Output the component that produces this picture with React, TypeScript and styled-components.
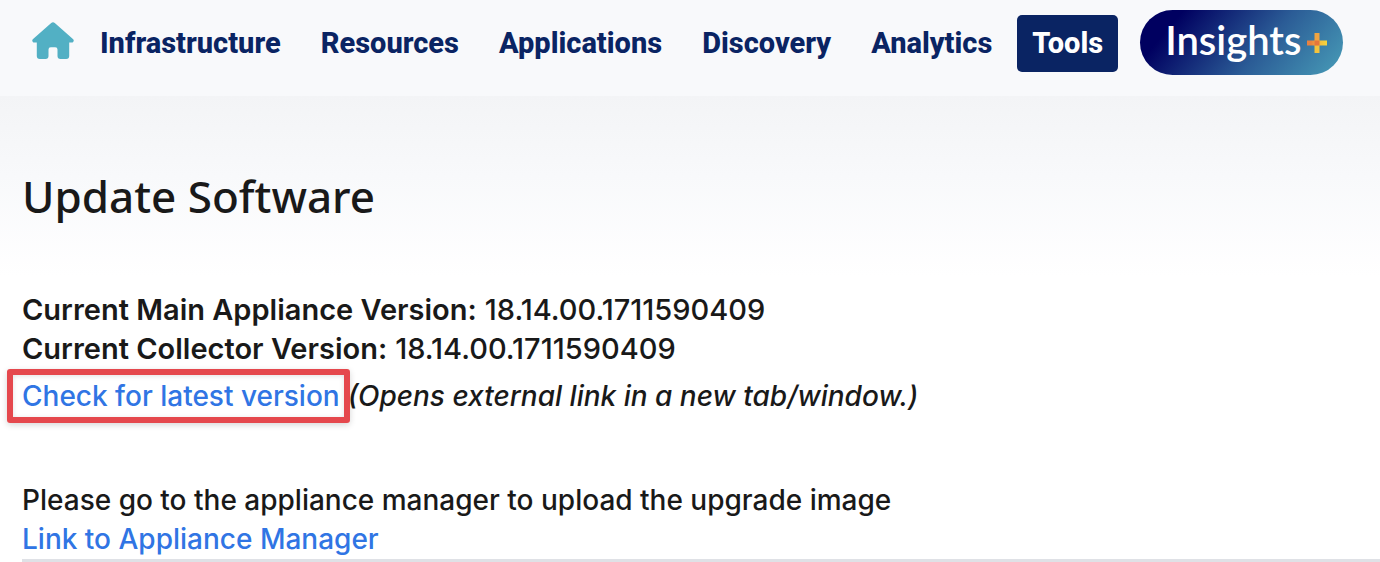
import React from 'react';
import styled, { createGlobalStyle } from 'styled-components';

const GlobalStyle = createGlobalStyle`
  *, *::before, *::after { box-sizing: border-box; }
  body {
    margin: 0;
    background: #fff;
    color: #191919;
    font-family: Inter, "Liberation Sans", sans-serif;
  }
`;

const Header = styled.header`
  display: flex;
  align-items: center;
  height: 96px;
  padding: 0 32px 10px;
  background: #f8f9fb;
`;

const HomeLink = styled.a`
  display: flex;
  margin-right: 11px;
  padding-bottom: 4px;
`;

const Nav = styled.nav`
  display: flex;
  align-items: center;
  gap: 10px;
`;

const NavLink = styled.a<{ $active?: boolean }>`
  padding: 0 15px;
  border-radius: 5px;
  background: ${(p) => (p.$active ? '#0a2463' : 'transparent')};
  color: ${(p) => (p.$active ? '#fff' : '#0a2463')};
  font: 800 29px/57px Roboto, "Liberation Sans", sans-serif;
  text-decoration: none;
`;

const InsightsLink = styled.a`
  display: flex;
  align-items: center;
  gap: 6px;
  height: 65px;
  margin: 0 0 2px 22px;
  padding: 0 16px 4px 25px;
  border-radius: 33px;
  background: linear-gradient(130deg, #000060 17%, #2b5c96 60%, #489db8 100%);
  color: #fff;
  font: 600 40px/48px Lato, "Liberation Sans", sans-serif;
  text-decoration: none;

  svg { margin-top: 6px; }
`;

const Main = styled.main`
  padding: 64px 0 0 22px;
  background: linear-gradient(#f3f4f6 0, #f8f9fb 80px, #fff 180px);
`;

const Title = styled.h1`
  margin: 0 0 58px;
  font: 500 44px/72px "Noto Sans", "Open Sans", sans-serif;
`;

const Versions = styled.dl`
  margin: 0;
  font-size: 29px;
  font-weight: 500;
  line-height: 39px;
`;

const Version = styled.div`
  display: flex;
  gap: 8px;

  dt { font-weight: 600; }
  dd { margin: 0; }
`;

const Text = styled.p`
  margin: 0;
  font-size: 28px;
  font-weight: 500;
  line-height: 39px;
`;

const CheckRow = styled(Text)`
  margin: 9px 0 65px;
`;

const TextLink = styled.a`
  color: #3075e4;
  text-decoration: none;
`;

const BoxedLink = styled(TextLink)`
  position: relative;
  margin-right: 8px;

  &::after {
    content: '';
    position: absolute;
    inset: -10px -10px -10px -15px;
    border: 6px solid #e5484d;
    border-radius: 3px;
    box-shadow: 0 2px 6px rgba(0, 0, 0, 0.16), inset 0 1px 5px rgba(0, 0, 0, 0.12);
    pointer-events: none;
  }
`;

const Divider = styled.hr`
  height: 3px;
  margin: 0;
  border: 0;
  background: #dfe1e6;
`;

const navItems = ['Infrastructure', 'Resources', 'Applications', 'Discovery', 'Analytics', 'Tools'];

const versions = [
  { label: 'Current Main Appliance Version:', value: '18.14.00.1711590409' },
  { label: 'Current Collector Version:', value: '18.14.00.1711590409' },
];

const HomeIcon = () => (
  <svg width="42" height="38" viewBox="0 0 42 38" aria-hidden="true">
    <path
      fill="#52b0c4"
      d="M19.2 1Q21 -.6 22.8 1L41.2 17.2Q42.6 19 40.6 20.4H37.2V34Q37.2 37 34.2 37H28.5Q25.5 37 25.5 34V27.5Q25.5 25.2 23.2 25.2H18.8Q16.5 25.2 16.5 27.5V34Q16.5 37 13.5 37H7.8Q4.8 37 4.8 34V20.4H1.4Q-.6 19 .8 17.2Z"
    />
  </svg>
);

const PlusIcon = () => (
  <svg width="20" height="20" viewBox="0 0 20 20" aria-hidden="true">
    <defs>
      <linearGradient id="plusAcross">
        <stop offset="0.2" stopColor="#e98240" />
        <stop offset="0.7" stopColor="#f3c23e" />
        <stop offset="1" stopColor="#f5d53c" />
      </linearGradient>
    </defs>
    <path fill="#efa441" d="M7.5 0H12.5V8H7.5Z" />
    <path fill="#f4c33c" d="M7.5 12H12.5V20H7.5Z" />
    <path fill="url(#plusAcross)" d="M0 7.5H20V12.5H0Z" />
    <path fill="#e6763c" d="M7.5 7.5H12.5V12.5H7.5Z" />
  </svg>
);

export default function App() {
  return (
    <>
      <GlobalStyle />
      <Header>
        <HomeLink href="#" aria-label="Home">
          <HomeIcon />
        </HomeLink>
        <Nav>
          {navItems.map((item) => (
            <NavLink key={item} href="#" $active={item === 'Tools'}>
              {item}
            </NavLink>
          ))}
        </Nav>
        <InsightsLink href="#">
          Insights
          <PlusIcon />
        </InsightsLink>
      </Header>
      <Main>
        <Title>Update Software</Title>
        <Versions>
          {versions.map((v) => (
            <Version key={v.label}>
              <dt>{v.label}</dt>
              <dd>{v.value}</dd>
            </Version>
          ))}
        </Versions>
        <CheckRow>
          <BoxedLink href="#" target="_blank">Check for latest version</BoxedLink>
          <em>(Opens external link in a new tab/window.)</em>
        </CheckRow>
        <Text>Please go to the appliance manager to upload the upgrade image</Text>
        <Text>
          <TextLink href="#">Link to Appliance Manager</TextLink>
        </Text>
        <Divider />
      </Main>
    </>
  );
}
